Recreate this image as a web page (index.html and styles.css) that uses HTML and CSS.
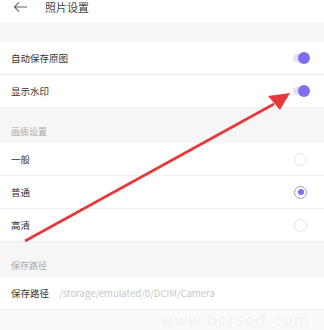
FILE: index.html
```html
<!DOCTYPE html>
<html lang="zh-CN">
<head>
    <meta charset="UTF-8">
    <title>照片设置</title>
    <link rel="stylesheet" href="styles.css">
</head>
<body>
    <div class="page">
        <div class="header">
            <svg class="back" viewBox="0 0 16 12">
                <path d="M15 6H1.5M6.5 1L1.5 6l5 5" />
            </svg>
            <span class="title">照片设置</span>
        </div>
        <div class="gap"></div>
        <div class="row">
            <span>自动保存原图</span>
            <div class="switch"><div class="knob"></div></div>
        </div>
        <div class="row">
            <span>显示水印</span>
            <div class="switch"><div class="knob"></div></div>
        </div>
        <div class="section">画质设置</div>
        <div class="row">
            <span>一般</span>
            <div class="radio"></div>
        </div>
        <div class="row">
            <span>普通</span>
            <div class="radio checked"></div>
        </div>
        <div class="row">
            <span>高清</span>
            <div class="radio"></div>
        </div>
        <div class="section">保存路径</div>
        <div class="row path-row">
            <span>保存路径</span>
            <span class="path">/storage/emulated/0/DCIM/Camera</span>
        </div>
        <div class="rest">
            <span class="watermark">www.bcrsed.com</span>
        </div>

        <svg class="pointer" viewBox="0 0 324 330">
            <line x1="25" y1="241" x2="274" y2="104" />
            <polygon points="290,93 268,96 280,110" />
        </svg>
    </div>
</body>
</html>
```
FILE: styles.css
```css
* {
    margin: 0;
    padding: 0;
    box-sizing: border-box;
}
body {
    font-family: "Noto Sans CJK SC", "Noto Sans", sans-serif;
    background-color: #f6f6f6;
    width: 324px;
    height: 330px;
    overflow: hidden;
}
.page {
    position: relative;
    width: 324px;
    height: 330px;
    display: flex;
    flex-direction: column;
}
.header {
    height: 23px;
    background: #fff;
    display: flex;
    align-items: flex-start;
    padding-left: 13px;
}
.back {
    width: 15px;
    height: 12px;
    margin-top: 1px;
    fill: none;
    stroke: #666;
    stroke-width: 1.2;
}
.title {
    margin-left: 17px;
    font-size: 11px;
    line-height: 14px;
    color: #444;
}
.gap {
    height: 19px;
}
.row {
    height: 33px;
    background: #fff;
    border-bottom: 1px solid #efefef;
    display: flex;
    align-items: center;
    justify-content: space-between;
    padding: 0 15px 0 11px;
    font-size: 9.5px;
    color: #333;
}
.section {
    height: 35px;
    padding: 0 11px 4px;
    display: flex;
    align-items: flex-end;
    font-size: 9px;
    line-height: 14px;
    color: #aaa;
}
.switch {
    position: relative;
    width: 16px;
    height: 8px;
    border-radius: 4px;
    background: #e4e0fc;
}
.knob {
    position: absolute;
    right: -1px;
    top: -2px;
    width: 12px;
    height: 12px;
    border-radius: 50%;
    background: #7c6ff0;
}
.radio {
    width: 13px;
    height: 13px;
    border-radius: 50%;
    border: 1px solid #e3e3e3;
    margin-right: 2px;
    display: flex;
    align-items: center;
    justify-content: center;
}
.radio.checked {
    border: 1.5px solid #9e95e6;
}
.radio.checked::after {
    content: "";
    width: 6px;
    height: 6px;
    border-radius: 50%;
    background: #7c6ff0;
}
.path-row {
    justify-content: flex-start;
    gap: 10px;
    white-space: nowrap;
    overflow: hidden;
}
.path {
    color: #c8c8c8;
    font-size: 9.5px;
}
.rest {
    flex: 1;
    background: #fafafa;
    display: flex;
    justify-content: flex-end;
    align-items: flex-end;
    padding: 0 14px 0 0;
}
.watermark {
    font-family: "DejaVu Sans", sans-serif;
    font-size: 16px;
    letter-spacing: 1px;
    color: #f2f2f2;
}
.pointer {
    position: absolute;
    left: 0;
    top: 0;
    width: 324px;
    height: 330px;
}
.pointer line {
    stroke: #e8393a;
    stroke-width: 2.6;
}
.pointer polygon {
    fill: #e8393a;
}
```
